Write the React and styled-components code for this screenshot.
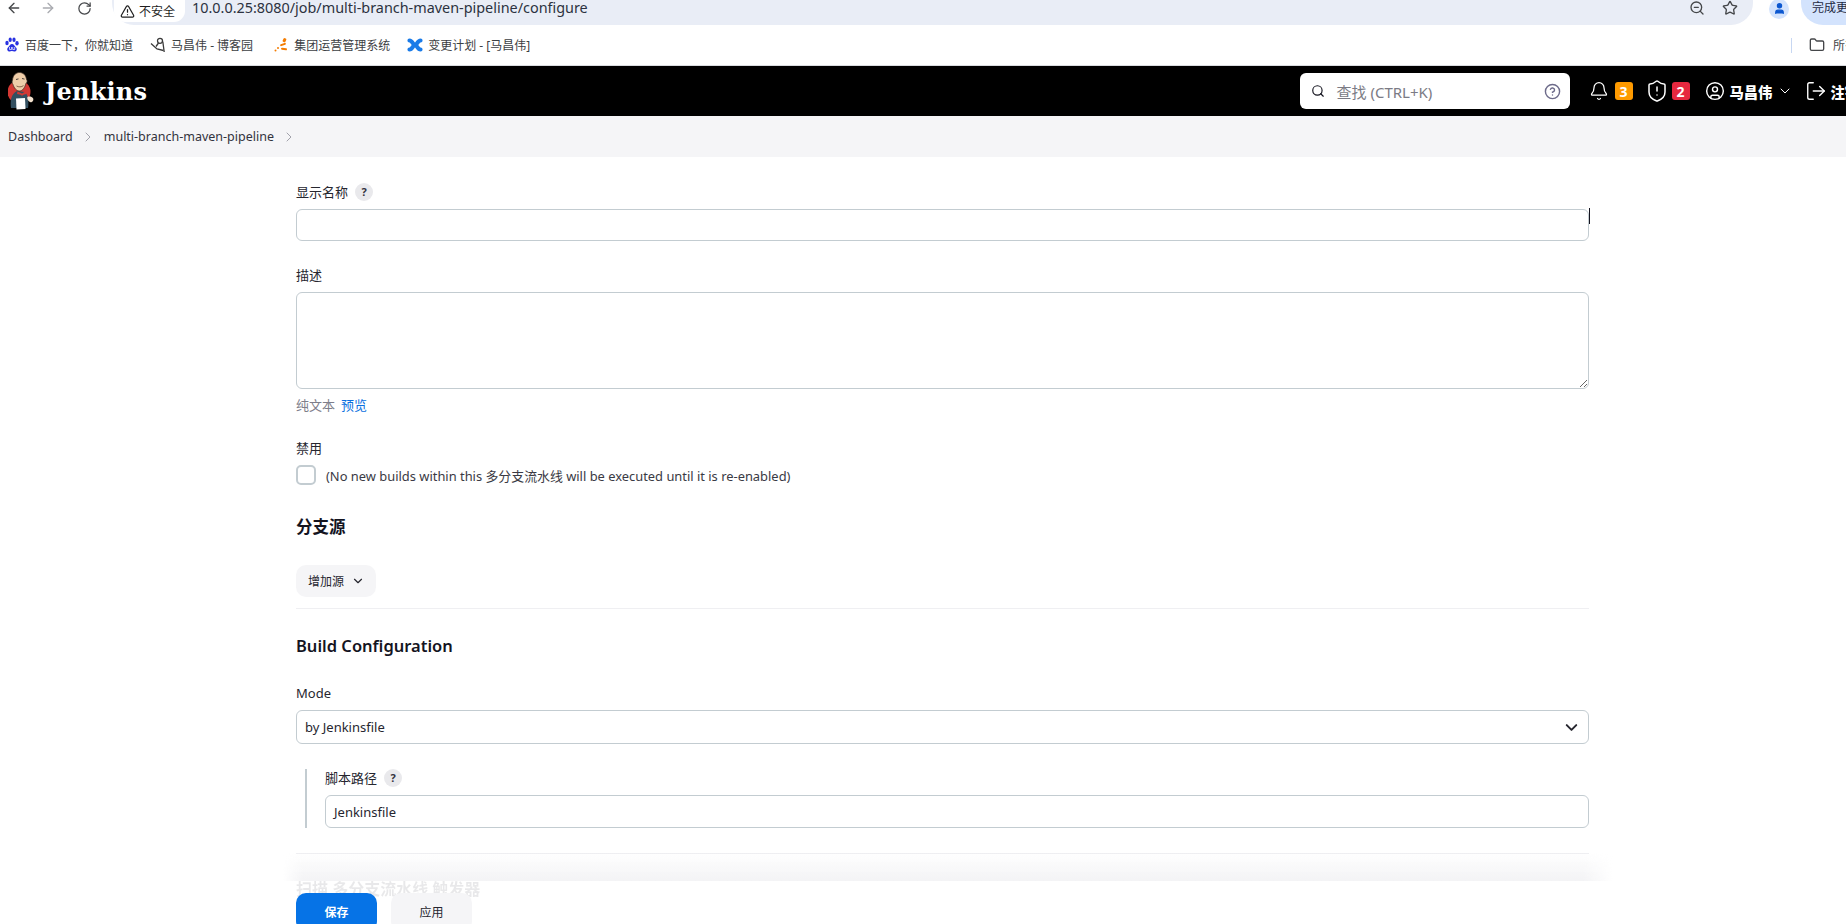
import React from 'react';
import styled, { createGlobalStyle } from 'styled-components';
import {
  ArrowLeft,
  ArrowRight,
  RotateCw,
  TriangleAlert,
  ZoomOut,
  Star,
  User,
  Folder,
  Search,
  CircleHelp,
  Bell,
  ShieldAlert,
  CircleUser,
  ChevronDown,
  ChevronRight,
  LogOut,
} from 'lucide-react';

const FONT = '"Noto Sans", "Noto Sans CJK SC", sans-serif';

const GlobalStyle = createGlobalStyle`
  html, body {
    margin: 0;
    padding: 0;
    height: 100%;
    overflow: hidden;
    background: #fff;
    font-family: ${FONT};
    color: #14141f;
  }
  * {
    box-sizing: border-box;
  }
`;

const Page = styled.div`
  position: relative;
  display: flex;
  flex-direction: column;
  height: 924px;
  overflow: hidden;
`;

const BrowserBar = styled.div`
  display: flex;
  align-items: center;
  height: 25px;
  overflow: hidden;
  flex: none;
`;

const NavIcons = styled.div`
  display: flex;
  align-items: center;
  width: 112px;
  height: 16px;
  margin-top: -9px;
  padding-left: 6px;
  gap: 18px;
`;

const NavButton = styled.span`
  display: flex;
  margin-left: ${(p) => p.$left || 0}px;
  color: ${(p) => (p.$off ? '#a9abb0' : '#45474a')};
`;

const AddressBar = styled.div`
  display: flex;
  align-items: center;
  width: 1641px;
  height: 42px;
  margin-top: -17px;
  padding: 17px 15px 0 2px;
  background: #e9edf6;
  border-radius: 0 0 22px 22px;
  flex: none;
`;

const SecurityPill = styled.div`
  display: flex;
  align-items: center;
  gap: 4px;
  height: 22px;
  width: 71px;
  margin-top: -3px;
  padding-left: 6px;
  border-radius: 0 0 11px 11px;
  background: #fff;
  font-size: 12px;
  color: #1f1f1f;
`;

const Url = styled.div`
  flex: 1;
  margin-left: 7px;
  margin-top: -9px;
  font-size: 14.4px;
  line-height: 16px;
  color: #2c3240;
  white-space: nowrap;
`;

const AddressIcons = styled.div`
  display: flex;
  gap: 17px;
  margin-top: -9px;
  color: #45474a;
`;

const Profile = styled.div`
  display: flex;
  align-items: center;
  justify-content: center;
  flex: none;
  width: 20px;
  height: 20px;
  margin: -8px 0 0 16px;
  border-radius: 50%;
  background: #d3e3fd;
  color: #0b57d0;
`;

const UpdatePill = styled.div`
  flex: none;
  width: 70px;
  height: 42px;
  margin: -17px -30px 0 12px;
  padding: 18px 0 0 11px;
  background: #d3e3fd;
  border-radius: 0 0 0 22px;
  font-size: 12px;
  line-height: 14px;
  color: #1f2a44;
  white-space: nowrap;
`;

const BookmarkBar = styled.div`
  display: flex;
  align-items: center;
  flex: none;
  height: 41px;
  padding-left: 4px;
  border-bottom: 1px solid #dadce0;
  overflow: hidden;
`;

const Bookmark = styled.div`
  display: flex;
  align-items: center;
  gap: 5px;
  margin-right: ${(p) => p.$gap}px;
  font-size: 12px;
  color: #3c4043;
  white-space: nowrap;
`;

const BookmarkDivider = styled.span`
  width: 1px;
  height: 15px;
  margin: 0 17px 0 auto;
  background: #c7d7f2;
`;

const AllBookmarks = styled.div`
  display: flex;
  align-items: center;
  gap: 8px;
  width: 37px;
  font-size: 12px;
  color: #45474a;
  white-space: nowrap;
  flex: none;

  svg {
    flex: none;
  }
`;

const Header = styled.header`
  display: flex;
  align-items: center;
  flex: none;
  height: 50px;
  padding-left: 8px;
  background: #000;
  color: #fff;
  overflow: hidden;
`;

const Brand = styled.div`
  display: flex;
  align-items: center;
  gap: 10px;
  font-family: "DejaVu Serif", serif;
  font-weight: 700;
  font-size: 24px;
  letter-spacing: 0.2px;
`;

const HeaderTools = styled.div`
  display: flex;
  align-items: center;
  flex: none;
  margin-left: auto;
  margin-right: -13px;
`;

const SearchBox = styled.div`
  display: flex;
  align-items: center;
  width: 270px;
  height: 36px;
  padding: 0 9px 0 11px;
  border-radius: 6px;
  background: #fff;
  color: #14141f;
`;

const SearchHint = styled.span`
  flex: 1;
  margin-left: 12px;
  font-size: 15px;
  color: #7b7b85;
`;

const HeaderAction = styled.div`
  display: flex;
  align-items: center;
  flex: none;
  gap: ${(p) => p.$gap}px;
  margin-left: ${(p) => p.$left}px;
  font-size: 14.3px;
  font-weight: 900;
  white-space: nowrap;
`;

const CountBadge = styled.span`
  display: flex;
  align-items: center;
  justify-content: center;
  width: 18px;
  height: 18px;
  border-radius: 3px;
  background: ${(p) => p.$bg};
  font-family: "Open Sans", sans-serif;
  font-size: 14px;
  font-weight: 700;
  color: #fff;
`;

const Breadcrumbs = styled.nav`
  display: flex;
  align-items: center;
  flex: none;
  height: 41px;
  padding-left: 8px;
  background: #f5f5f7;
  font-size: 12.5px;
  color: #33333d;
`;

const Crumb = styled.span`
  white-space: nowrap;
`;

const CrumbArrow = styled.span`
  display: flex;
  margin: 0 8px 0 7px;
  color: #a2a2ab;
`;

const Main = styled.main`
  flex: 1;
  min-height: 0;
  padding: 26px 257px 0 296px;
`;

const Field = styled.div`
  margin-top: ${(p) => p.$top || 0}px;
  margin-bottom: ${(p) => p.$bottom || 0}px;
`;

const LabelRow = styled.div`
  display: flex;
  align-items: center;
  gap: 7px;
  height: 18px;
  margin-bottom: 8px;
  font-size: 13px;
  line-height: 18px;
  color: #26262f;
`;

const Help = styled.span`
  display: flex;
  align-items: center;
  justify-content: center;
  width: 18px;
  height: 18px;
  border-radius: 50%;
  background: #e9e9ec;
  font-size: 11px;
  font-weight: 700;
  color: #33333d;
`;

const TextBox = styled.div`
  display: flex;
  align-items: center;
  height: ${(p) => p.$height}px;
  padding: 0 8px;
  border: 1px solid #c3ccd1;
  border-radius: 6px;
  background: #fff;
  font-size: 13px;
  color: #26262f;
`;

const TextArea = styled.textarea`
  display: block;
  width: 100%;
  height: 97px;
  padding: 8px;
  border: 1px solid #c3ccd1;
  border-radius: 6px;
  background: #fff;
  outline: none;
`;

const FormatLinks = styled.div`
  display: flex;
  gap: 6px;
  margin-top: 7px;
  font-size: 13px;
  line-height: 18px;
  color: #7e7e8a;
`;

const PreviewLink = styled.span`
  color: #0a6fe0;
`;

const CheckRow = styled.div`
  display: flex;
  align-items: center;
  gap: 10px;
  font-size: 12.9px;
  color: #3a3a44;
  white-space: nowrap;
`;

const CheckBox = styled.span`
  width: 20px;
  height: 20px;
  border: 2px solid #c3ccd1;
  border-radius: 5px;
  background: #fff;
`;

const SectionTitle = styled.h2`
  margin: 0;
  font-size: 16.5px;
  line-height: 22px;
  font-weight: 600;
  color: #14141f;
`;

const AddButton = styled.div`
  display: inline-flex;
  align-items: center;
  gap: 7px;
  height: 32px;
  padding: 0 11px 0 12px;
  border-radius: 10px;
  background: #f5f5f7;
  font-size: 12px;
  color: #26262f;
`;

const Divider = styled.hr`
  height: 1px;
  margin: ${(p) => p.$top || 0}px 0 0;
  border: 0;
  background: #efeff2;
`;

const SelectBox = styled(TextBox)`
  justify-content: space-between;
  padding-right: 7px;
`;

const Nested = styled.div`
  margin-left: 9px;
  padding-left: 18px;
  border-left: 2px solid #c3ccd1;
`;

const BottomBar = styled.div`
  position: absolute;
  left: 0;
  right: 0;
  bottom: 0;
  height: 71px;
  pointer-events: none;
`;

const BarShade = styled.div`
  position: absolute;
  top: 0;
  left: 283px;
  width: 1330px;
  height: 28px;
  background: linear-gradient(to bottom, rgba(240, 240, 242, 0), #f3f3f5);
  -webkit-mask-image: linear-gradient(to right, transparent, #000 20px, #000 1300px, transparent);
  mask-image: linear-gradient(to right, transparent, #000 20px, #000 1300px, transparent);
`;

const GhostTitle = styled.div`
  position: absolute;
  top: 25px;
  left: 296px;
  font-size: 16px;
  line-height: 22px;
  font-weight: 600;
  color: #14141f;
  opacity: 0.09;
  filter: blur(0.4px);
  white-space: nowrap;
`;

const BarButtons = styled.div`
  position: absolute;
  top: 40px;
  left: 296px;
  display: flex;
  gap: 14px;
`;

const BarButton = styled.div`
  display: flex;
  align-items: center;
  justify-content: center;
  width: ${(p) => p.$width}px;
  height: 38px;
  border-radius: 10px;
  background: ${(p) => (p.$primary ? '#0673e6' : '#f5f5f7')};
  color: ${(p) => (p.$primary ? '#fff' : '#26262f')};
  font-size: 12px;
  font-weight: ${(p) => (p.$primary ? 700 : 400)};
`;

const Caret = styled.span`
  position: absolute;
  top: 208px;
  left: 1589px;
  width: 1px;
  height: 16px;
  background: #14141f;
`;

const BaiduIcon = () => (
  <svg width="16" height="16" viewBox="0 0 16 16">
    <g fill="#2932e1">
      <ellipse cx="3" cy="6" rx="1.7" ry="2.2" />
      <ellipse cx="6.2" cy="2.8" rx="1.6" ry="2.2" />
      <ellipse cx="10" cy="2.8" rx="1.6" ry="2.2" />
      <ellipse cx="13" cy="6.2" rx="1.7" ry="2.2" />
      <path d="M8 7c-2 0-2.4 2-4 3.4C2.7 11.5 3 14.6 5.8 14.5c1 0 1.5-.4 2.2-.4s1.3.4 2.3.4c2.7 0 3-3 1.7-4.1C10.5 9 10 7 8 7z" />
    </g>
    <path d="M5.5 10v2.500h2V10M8.700 10v2.500h2V10" fill="none" stroke="#fff" strokeWidth="0.7" />
  </svg>
);

const BlogIcon = () => (
  <svg width="16" height="16" viewBox="0 0 16 16" fill="none" stroke="#3a3a3a" strokeWidth="1.3">
    <path d="M1 6.5 7 12l6.5 1.5" />
    <circle cx="10" cy="3.8" r="2.5" />
    <path d="M8.5 6 6 9.5M12.800 4.500l1.400 10.500" />
  </svg>
);

const OpsIcon = () => (
  <svg width="16" height="16" viewBox="0 0 16 16" fill="#f47c00">
    <rect x="10" y="1" width="3" height="4" rx="1" transform="rotate(25 11 3)" />
    <rect x="7" y="6.5" width="6" height="2" rx="1" transform="rotate(-20 10 7.5)" />
    <rect x="8" y="11" width="6" height="2" rx="1" transform="rotate(8 11 12)" />
    <circle cx="5" cy="11" r="1" />
    <circle cx="2.5" cy="13.5" r="1" />
  </svg>
);

const ChangeIcon = () => (
  <svg width="16" height="16" viewBox="0 0 16 16" fill="none" stroke="#1a7be8" strokeWidth="4.2" strokeLinecap="round">
    <path d="M2.5 3.5c3 0 3.5 4.5 5.500 4.500s2.500-4.500 5.500-4.500" />
    <path d="M2.5 12.5c3 0 3.5-4.500 5.500-4.500s2.500 4.500 5.500 4.500" />
  </svg>
);

const JenkinsLogo = () => (
  <svg width="27" height="38" viewBox="0 0 27 38">
    <circle cx="11" cy="20" r="11.5" fill="#d33833" />
    <path d="M3 36c-1-7 0-14 6-17l8 1c3 3 4 9 3 16z" fill="#335061" />
    <path d="M4.500 8C5 3 8 .5 11.500 .5S18 3 18.500 7.500c1 1 .8 3-.6 4-1 4-3.400 7.500-6.400 7.500s-5.500-3-6.500-6.500C4 11.500 3.800 9 4.500 8z" fill="#eecda9" stroke="#3a2c22" strokeWidth="0.7" />
    <path d="M8 7.500l2.500-.6M14 6.500l2.500.6" stroke="#231f20" strokeWidth="0.8" />
    <path d="M8.500 14c2 1.200 5 1.200 7-.4" stroke="#6b4c36" strokeWidth="0.8" fill="none" />
    <path d="M9.500 19.500l4.500 2 4-2.500.5 3-3 .8-1.500 1-1.500-1-3.500-.8z" fill="#d33833" />
    <path d="M8 26.500l9-.5 .5 11-9 .5z" fill="#fff" />
    <path d="M19.500 25c1.800-.8 4.500-.3 5.500 1.200s-.3 4-2.300 4-4.200-3.600-3.200-5.200z" fill="#f5e3cf" />
  </svg>
);

const App = () => (
  <Page>
    <GlobalStyle />
    <BrowserBar>
      <NavIcons>
        <NavButton><ArrowLeft size={16} /></NavButton>
        <NavButton $off><ArrowRight size={16} /></NavButton>
        <NavButton $left={3}><RotateCw size={15} /></NavButton>
      </NavIcons>
      <AddressBar>
        <SecurityPill>
          <TriangleAlert size={15} />
          不安全
        </SecurityPill>
        <Url>10.0.0.25:8080/job/multi-branch-maven-pipeline/configure</Url>
        <AddressIcons>
          <ZoomOut size={16} />
          <Star size={16} />
        </AddressIcons>
      </AddressBar>
      <Profile><User size={13} fill="currentColor" /></Profile>
      <UpdatePill>完成更新</UpdatePill>
    </BrowserBar>

    <BookmarkBar>
      <Bookmark $gap={17}><BaiduIcon />百度一下，你就知道</Bookmark>
      <Bookmark $gap={20}><BlogIcon />马昌伟 - 博客园</Bookmark>
      <Bookmark $gap={17}><OpsIcon />集团运营管理系统</Bookmark>
      <Bookmark $gap={0}><ChangeIcon />变更计划 - [马昌伟]</Bookmark>
      <BookmarkDivider />
      <AllBookmarks><Folder size={16} />所有书签</AllBookmarks>
    </BookmarkBar>

    <Header>
      <Brand><JenkinsLogo />Jenkins</Brand>
      <HeaderTools>
        <SearchBox>
          <Search size={14} />
          <SearchHint>查找 (CTRL+K)</SearchHint>
          <CircleHelp size={17} color="#6d6b8a" />
        </SearchBox>
        <HeaderAction $left={19} $gap={6}><Bell size={20} strokeWidth={1.5} /><CountBadge $bg="#fe9a00">3</CountBadge></HeaderAction>
        <HeaderAction $left={12} $gap={3}><ShieldAlert size={24} strokeWidth={1.5} /><CountBadge $bg="#e6283f">2</CountBadge></HeaderAction>
        <HeaderAction $left={15} $gap={5}><CircleUser size={20} strokeWidth={1.7} />马昌伟<ChevronDown size={16} strokeWidth={1.5} /></HeaderAction>
        <HeaderAction $left={12} $gap={3}><LogOut size={22} strokeWidth={1.5} />注销</HeaderAction>
      </HeaderTools>
    </Header>

    <Breadcrumbs>
      <Crumb>Dashboard</Crumb>
      <CrumbArrow><ChevronRight size={16} strokeWidth={1.5} /></CrumbArrow>
      <Crumb>multi-branch-maven-pipeline</Crumb>
      <CrumbArrow><ChevronRight size={16} strokeWidth={1.5} /></CrumbArrow>
    </Breadcrumbs>

    <Main>
      <Field $bottom={25}>
        <LabelRow>显示名称<Help>?</Help></LabelRow>
        <TextBox $height={32} />
      </Field>
      <Field $bottom={25}>
        <LabelRow>描述</LabelRow>
        <TextArea readOnly />
        <FormatLinks>纯文本 <PreviewLink>预览</PreviewLink></FormatLinks>
      </Field>
      <Field $bottom={31}>
        <LabelRow>禁用</LabelRow>
        <CheckRow>
          <CheckBox />
          (No new builds within this 多分支流水线 will be executed until it is re-enabled)
        </CheckRow>
      </Field>
      <Field $bottom={27}><SectionTitle>分支源</SectionTitle></Field>
      <Field $bottom={11}><AddButton>增加源<ChevronDown size={14} /></AddButton></Field>
      <Divider />
      <Field $top={26} $bottom={27}><SectionTitle>Build Configuration</SectionTitle></Field>
      <Field $bottom={25}>
        <LabelRow>Mode</LabelRow>
        <SelectBox $height={34}>by Jenkinsfile<ChevronDown size={19} strokeWidth={2.5} /></SelectBox>
      </Field>
      <Nested>
        <LabelRow>脚本路径<Help>?</Help></LabelRow>
        <TextBox $height={33}>Jenkinsfile</TextBox>
      </Nested>
      <Divider $top={25} />
    </Main>

    <BottomBar>
      <BarShade />
      <GhostTitle>扫描 多分支流水线 触发器</GhostTitle>
      <BarButtons>
        <BarButton $primary $width={81}>保存</BarButton>
        <BarButton $width={81}>应用</BarButton>
      </BarButtons>
    </BottomBar>
    <Caret />
  </Page>
);

export default App;
